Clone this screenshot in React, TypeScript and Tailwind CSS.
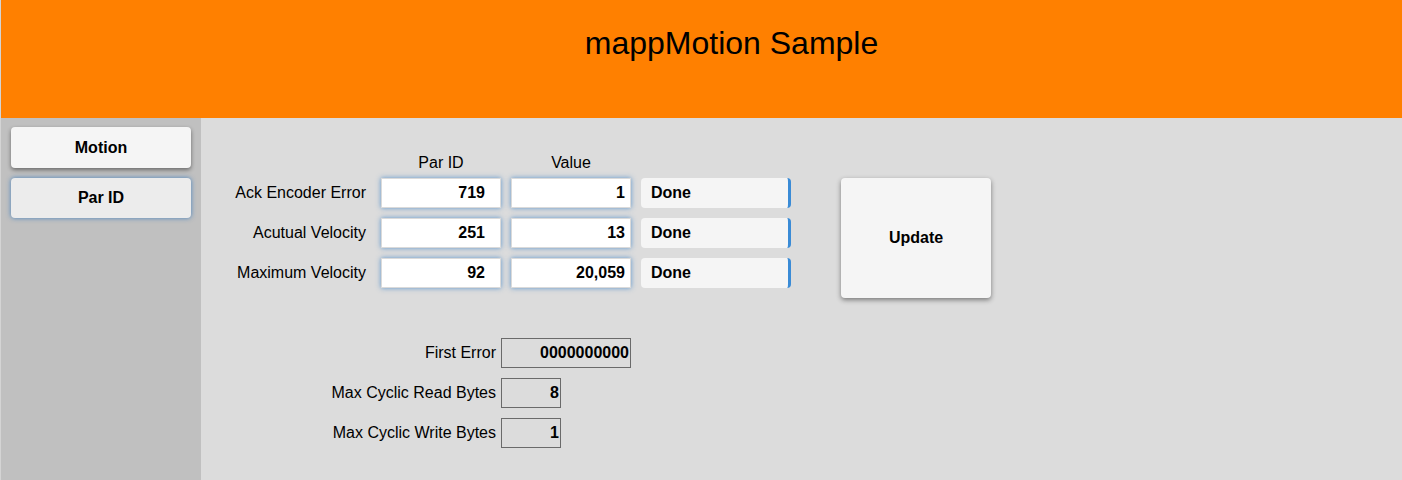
const rows = [
  { label: "Ack Encoder Error", parId: "719", value: "1", status: "Done" },
  { label: "Acutual Velocity", parId: "251", value: "13", status: "Done" },
  { label: "Maximum Velocity", parId: "92", value: "20,059", status: "Done" },
];

const info = [
  { label: "First Error", value: "0000000000", width: "w-[130px]" },
  { label: "Max Cyclic Read Bytes", value: "8", width: "w-[60px]" },
  { label: "Max Cyclic Write Bytes", value: "1", width: "w-[60px]" },
];

const NavButton = ({ label, active }: { label: string; active?: boolean }) => (
  <button
    className={
      active
        ? "h-[40px] w-[180px] rounded-[4px] bg-[#ececec] text-[16px] font-bold text-black shadow-[0_0_5px_rgba(50,120,190,0.85)]"
        : "h-[41px] w-[180px] rounded-[4px] bg-[#f5f5f5] text-[16px] font-bold text-black shadow-[0_2px_4px_rgba(0,0,0,0.45)]"
    }
  >
    {label}
  </button>
);

const NumField = ({ value, pad }: { value: string; pad: string }) => (
  <div
    className={`flex h-[30px] w-[120px] items-center justify-end border border-[#dadada] bg-white font-bold shadow-[0_0_5px_rgba(60,130,200,0.8)] ${pad}`}
  >
    {value}
  </div>
);

export default function App() {
  return (
    <div
      className="flex h-[480px] w-full flex-col border-l border-[#d4d4d4] text-[16px] text-black"
      style={{ fontFamily: '"Liberation Sans", Arial, sans-serif' }}
    >
      {/* Header */}
      <header className="h-[118px] shrink-0 bg-[#ff8000] pl-[60px] pt-[25px] text-center text-[32px] leading-[36px]">
        mappMotion Sample
      </header>

      <div className="flex flex-1">
        {/* Sidebar */}
        <nav className="flex w-[200px] flex-col gap-[10px] bg-[#c0c0c0] px-[10px] pt-[9px]">
          <NavButton label="Motion" />
          <NavButton label="Par ID" active />
        </nav>

        {/* Content */}
        <main className="flex-1 bg-[#dcdcdc] pt-[30px]">
          <div className="flex items-start">
            <div className="flex flex-col gap-[10px]">
              <div className="-mb-[10px] flex h-[30px] items-center">
                <div className="w-[180px]" />
                <div className="w-[120px] text-center">Par ID</div>
                <div className="ml-[10px] w-[120px] text-center">Value</div>
              </div>
              {rows.map((r) => (
                <div key={r.label} className="flex h-[30px] items-center">
                  <div className="w-[180px] pr-[15px] text-right">{r.label}</div>
                  <NumField value={r.parId} pad="pr-[15px]" />
                  <div className="ml-[10px]">
                    <NumField value={r.value} pad="pr-[5px]" />
                  </div>
                  <div className="ml-[10px] flex h-[30px] w-[150px] items-center rounded-[4px] border-r-[3px] border-[#3a8bd6] bg-[#f5f5f5] pl-[10px] font-bold">
                    {r.status}
                  </div>
                </div>
              ))}
            </div>
            <button className="ml-[50px] mt-[30px] h-[120px] w-[150px] rounded-[4px] bg-[#f5f5f5] text-[16px] font-bold shadow-[0_2px_5px_rgba(0,0,0,0.45)]">
              Update
            </button>
          </div>

          {/* Info */}
          <div className="mt-[40px] flex flex-col gap-[10px]">
            {info.map((i) => (
              <div key={i.label} className="flex h-[30px] items-center">
                <div className="w-[300px] pr-[5px] text-right">{i.label}</div>
                <div
                  className={`flex h-[30px] items-center justify-end border border-[#6a6a6a] pr-[1px] font-bold ${i.width}`}
                >
                  {i.value}
                </div>
              </div>
            ))}
          </div>
        </main>
      </div>
    </div>
  );
}
